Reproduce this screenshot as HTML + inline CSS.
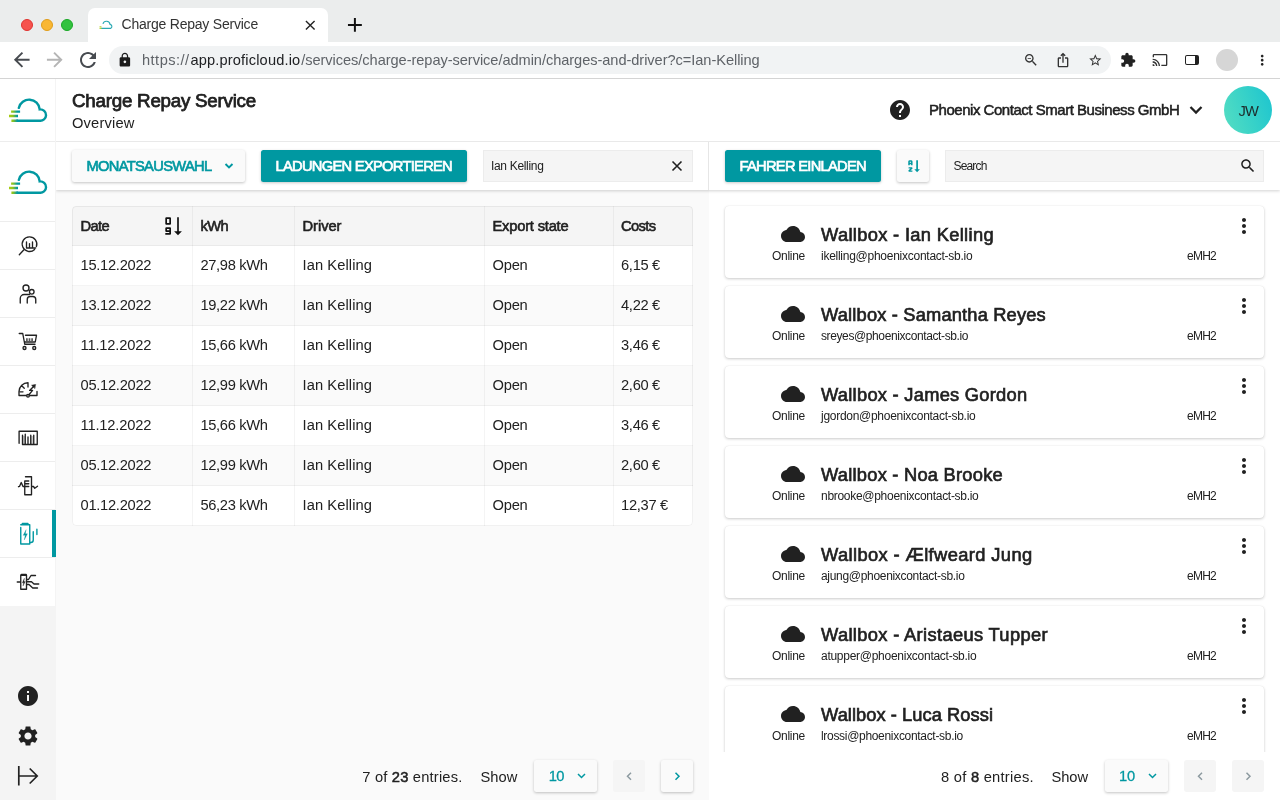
<!DOCTYPE html>
<html lang="en">
<head>
<meta charset="utf-8">
<title>Charge Repay Service</title>
<style>
*{box-sizing:border-box;margin:0;padding:0}
html,body{width:1280px;height:800px;overflow:hidden}
body{position:relative;background:#fff;font-family:"Liberation Sans",sans-serif;color:#212121;-webkit-font-smoothing:antialiased}
.abs{position:absolute}
.t{position:absolute;white-space:nowrap;line-height:1}
svg{display:block;position:absolute;overflow:visible}
b,.b{font-weight:400;-webkit-text-stroke:.5px #212121}
/* browser chrome */
#tabbar{left:0;top:0;width:1280px;height:42px;background:#ebeded}
#tab{left:88px;top:8px;width:240px;height:34px;background:#fff;border-radius:7px 7px 0 0}
.dot{width:12px;height:12px;border-radius:50%;top:19px}
#toolbar{left:0;top:42px;width:1280px;height:37px;background:#fff;border-bottom:1px solid #d4d4d4}
#pill{left:109px;top:46px;width:1002px;height:28px;border-radius:14px;background:#f1f3f4}
/* app */
#side{left:0;top:79px;width:56px;height:721px;background:#f4f4f4}
#sidetop{left:0;top:79px;width:55px;height:527px;background:#fff}
.sep{left:0;width:55px;height:1px;background:#ededed}
#hdr{left:56px;top:79px;width:1224px;height:63px;background:#fff;border-bottom:1px solid #e9e9e9}
#tools{left:56px;top:142px;width:1224px;height:48px;background:#fff;box-shadow:0 1px 3px rgba(0,0,0,.18);clip-path:inset(0 0 -6px 0)}
#leftbg{left:56px;top:190px;width:653px;height:610px;background:#fafafa}
#vdiv{left:708px;top:142px;width:1px;height:48px;background:#e6e6e6}
.btn{border-radius:2.5px;height:32px;top:150px}
.teal{background:#0098a1;box-shadow:0 1px 3px rgba(0,0,0,.22)}
.lite{background:#fafafa;box-shadow:0 1px 3px rgba(0,0,0,.24)}
.field{background:#f5f5f5;border:1px solid #ececec;height:32px;top:150px}
</style>
</head>
<body>
<!-- ============ BROWSER CHROME ============ -->
<div id="tabbar" class="abs"></div>
<div id="tab" class="abs"></div>
<div class="abs dot" style="left:21px;background:#f6534e;border:1px solid #e0332f"></div>
<div class="abs dot" style="left:41px;background:#f9b733;border:1px solid #e09d1a"></div>
<div class="abs dot" style="left:61px;background:#33c23f;border:1px solid #18a825"></div>
<div id="toolbar" class="abs"></div>
<div id="pill" class="abs"></div>

<!-- tab favicon -->
<svg style="left:99.4px;top:20.4px" width="14" height="9" viewBox="8 97 39.600 25.400"><path d="M19.100 107.900A10.400 10.400 0 0 1 39.300 109.400A5.900 5.900 0 0 1 40.800 120.700H13" fill="none" stroke="#2aa9b3" stroke-width="3.200"/><path d="M9.500 120.700H15M9.500 116H15" stroke="#b5d334" stroke-width="3.200"/></svg>
<svg style="left:301.850px;top:16.650px" width="16.500" height="16.500" viewBox="0 0 24 24"><path fill="#222" d="M19 6.41L17.59 5 12 10.590 6.41 5 5 6.41 10.59 12 5 17.59 6.41 19 12 13.41 17.59 19 19 17.59 13.41 12z"/></svg>
<svg style="left:343px;top:13px" width="23.800" height="23.800" viewBox="0 0 24 24"><path fill="#111" d="M19 13h-6v6h-2v-6H5v-2h6V5h2v6h6v2z"/></svg>
<!-- nav -->
<svg style="left:10.300px;top:48.400px" width="23.500" height="23.500" viewBox="0 0 24 24"><path fill="#474b50" d="M20 11H7.83l5.59-5.59L12 4l-8 8 8 8 1.41-1.410L7.83 13H20v-2z"/></svg>
<svg style="left:43.200px;top:48.400px" width="23.500" height="23.500" viewBox="0 0 24 24"><path fill="#b5b5b5" d="M12 4l-1.41 1.41L16.17 11H4v2h12.17l-5.580 5.590L12 20l8-8z"/></svg>
<svg style="left:75.900px;top:47.900px" width="24" height="24" viewBox="0 0 24 24"><path fill="#474b50" d="M17.65 6.35C16.2 4.9 14.21 4 12 4c-4.42 0-7.99 3.58-7.990 8s3.570 8 7.990 8c3.73 0 6.84-2.55 7.73-6h-2.080c-.82 2.33-3.04 4-5.650 4-3.31 0-6-2.690-6-6s2.690-6 6-6c1.66 0 3.140.69 4.220 1.780L13 11h7V4l-2.350 2.350z"/></svg>
<svg style="left:117.100px;top:52.100px" width="15.750" height="15.750" viewBox="0 0 24 24"><path fill="#1c1c1c" fill-rule="evenodd" d="M18 8h-1V6c0-2.760-2.240-5-5-5S7 3.240 7 6v2H6c-1.100 0-2 .9-2 2v10c0 1.100.9 2 2 2h12c1.100 0 2-.9 2-2V10c0-1.100-.9-2-2-2zm-6 9c-1.100 0-2-.9-2-2s.9-2 2-2 2 .9 2 2-.9 2-2 2zm3.100-9H8.900V6c0-1.710 1.390-3.100 3.100-3.100 1.710 0 3.100 1.390 3.100 3.100v2z"/></svg>
<svg style="left:1022.800px;top:52.200px" width="16" height="16" viewBox="0 0 24 24"><path fill="#333" d="M15.5 14h-.79l-.28-.27C15.410 12.590 16 11.110 16 9.500 16 5.910 13.090 3 9.500 3S3 5.910 3 9.500 5.910 16 9.500 16c1.610 0 3.090-.59 4.230-1.570l.27.28v.79l5 4.990L20.490 19l-4.990-5zm-6 0C7.010 14 5 11.990 5 9.500S7.010 5 9.500 5 14 7.010 14 9.500 11.990 14 9.500 14zM7 9h5v1H7z"/></svg>
<svg style="left:1054.900px;top:52.200px" width="16" height="16" viewBox="0 0 24 24"><path fill="#333" d="M16 5l-1.420 1.420-1.590-1.590V16h-1.980V4.830L9.420 6.420 8 5l4-4 4 4zm4 5v11c0 1.100-.9 2-2 2H6c-1.110 0-2-.9-2-2V10c0-1.110.89-2 2-2h3v2H6v11h12V10h-3V8h3c1.100 0 2 .9 2 2z"/></svg>
<svg style="left:1087.600px;top:52.500px" width="14.600" height="14.600" viewBox="0 0 24 24"><path fill="#333" d="M22 9.240l-7.190-.62L12 2 9.190 8.630 2 9.240l5.460 4.730L5.820 21 12 17.270 18.180 21l-1.630-7.030L22 9.240zM12 15.400l-3.760 2.270 1-4.280-3.320-2.880 4.380-.38L12 6.100l1.710 4.040 4.380.38-3.320 2.880 1 4.280L12 15.400z"/></svg>
<svg style="left:1120px;top:52px" width="16" height="16" viewBox="0 0 24 24"><path fill="#222" d="M20.500 11H19V7c0-1.100-.9-2-2-2h-4V3.500C13 2.120 11.880 1 10.500 1S8 2.120 8 3.500V5H4c-1.100 0-1.990.9-1.990 2v3.800H3.500c1.490 0 2.700 1.210 2.700 2.700s-1.210 2.700-2.700 2.700H2V20c0 1.100.9 2 2 2h3.800v-1.500c0-1.490 1.210-2.700 2.700-2.700 1.490 0 2.700 1.210 2.700 2.700V22H17c1.100 0 2-.9 2-2v-4h1.500c1.380 0 2.500-1.120 2.500-2.500S21.880 11 20.500 11z"/></svg>
<svg style="left:1151.600px;top:52.300px" width="16" height="16" viewBox="0 0 24 24"><path fill="#333" d="M21 3H3c-1.100 0-2 .9-2 2v3h2V5h18v14h-7v2h7c1.100 0 2-.9 2-2V5c0-1.100-.9-2-2-2zM1 18v3h3c0-1.660-1.340-3-3-3zm0-4v2c2.760 0 5 2.240 5 5h2c0-3.870-3.130-7-7-7zm0-4v2c4.970 0 9 4.030 9 9h2c0-6.080-4.930-11-11-11z"/></svg>
<div class="abs" style="left:1185.400px;top:54.900px;width:13.500px;height:10.400px;border:1.600px solid #222;border-radius:2px;border-right-width:4.600px"></div>
<div class="abs" style="left:1216px;top:49px;width:22px;height:22px;border-radius:50%;background:#d6d6d6"></div>
<svg style="left:1253.800px;top:52px" width="16.400" height="16.400" viewBox="0 0 24 24"><path fill="#222" d="M12 8c1.100 0 2-.9 2-2s-.9-2-2-2-2 .9-2 2 .9 2 2 2zm0 2c-1.100 0-2 .9-2 2s.9 2 2 2 2-.9 2-2-.9-2-2-2zm0 6c-1.100 0-2 .9-2 2s.9 2 2 2 2-.9 2-2-.9-2-2-2z"/></svg>

<!-- ============ APP ============ -->
<div id="side" class="abs"></div>
<div id="sidetop" class="abs"></div>
<div id="hdr" class="abs"></div>
<div id="leftbg" class="abs"></div>
<div class="abs" id="tbl" style="left:72px;top:206px;width:621px;height:320px;background:#fff;border-radius:4px;overflow:hidden"><div class="abs" style="left:0;top:0;width:621px;height:40px;background:#f5f5f5"></div><div class="abs" style="left:0;top:80px;width:621px;height:40px;background:#fafafa"></div><div class="abs" style="left:0;top:160px;width:621px;height:40px;background:#fafafa"></div><div class="abs" style="left:0;top:240px;width:621px;height:40px;background:#fafafa"></div><div class="abs" style="left:0;top:39px;width:621px;height:1px;background:rgba(0,0,0,.045)"></div><div class="abs" style="left:0;top:79px;width:621px;height:1px;background:rgba(0,0,0,.045)"></div><div class="abs" style="left:0;top:119px;width:621px;height:1px;background:rgba(0,0,0,.045)"></div><div class="abs" style="left:0;top:159px;width:621px;height:1px;background:rgba(0,0,0,.045)"></div><div class="abs" style="left:0;top:199px;width:621px;height:1px;background:rgba(0,0,0,.045)"></div><div class="abs" style="left:0;top:239px;width:621px;height:1px;background:rgba(0,0,0,.045)"></div><div class="abs" style="left:0;top:279px;width:621px;height:1px;background:rgba(0,0,0,.045)"></div><div class="abs" style="left:120px;top:0;width:1px;height:320px;background:rgba(0,0,0,.045)"></div><div class="abs" style="left:222px;top:0;width:1px;height:320px;background:rgba(0,0,0,.045)"></div><div class="abs" style="left:412px;top:0;width:1px;height:320px;background:rgba(0,0,0,.045)"></div><div class="abs" style="left:541px;top:0;width:1px;height:320px;background:rgba(0,0,0,.045)"></div></div><div class="abs" style="left:72px;top:206px;width:621px;height:320px;border:1px solid rgba(0,0,0,.055);border-radius:4px"></div><svg style="left:160px;top:212px" width="28" height="28" viewBox="160 212 28 28"><path fill="#111" fill-rule="evenodd" d="M166.300 217.300H170A1 1 0 0 1 171 218.300V223.800A1 1 0 0 1 170 224.800H166.300A1 1 0 0 1 165.300 223.800V218.300A1 1 0 0 1 166.300 217.300ZM167 219H169.300V223.100H167ZM166.300 227.300H170A1 1 0 0 1 171 228.300V233.800A1 1 0 0 1 170 234.800H165.300V233.100H169.300V232H166.300A1 1 0 0 1 165.300 231V228.300A1 1 0 0 1 166.300 227.300ZM167 229H169.300V230.300H167ZM177.150 217.200H178.850V231.200H181.900L178 235.300L174.100 231.200H177.150Z"/></svg>
<div class="abs" style="left:0;top:0;width:1280px;height:752px;overflow:hidden;will-change:transform"><div class="abs" style="left:725px;top:206px;width:539px;height:72px;background:#fff;border-radius:4px;box-shadow:0 1px 3px rgba(0,0,0,.2),0 0 1px rgba(0,0,0,.12)"></div><svg style="left:781px;top:222.3px" width="24" height="24" viewBox="0 0 24 24"><path fill="#212121" d="M19.350 10.040C18.670 6.590 15.640 4 12 4 9.110 4 6.600 5.640 5.350 8.040 2.340 8.360 0 10.910 0 14c0 3.310 2.690 6 6 6h13c2.760 0 5-2.240 5-5 0-2.640-2.050-4.780-4.650-4.960z"/></svg><svg style="left:1232px;top:214px" width="24" height="24" viewBox="0 0 24 24"><path fill="#212121" d="M12 8c1.100 0 2-.9 2-2s-.9-2-2-2-2 .9-2 2 .9 2 2 2zm0 2c-1.100 0-2 .9-2 2s.9 2 2 2 2-.9 2-2-.9-2-2-2zm0 6c-1.100 0-2 .9-2 2s.9 2 2 2 2-.9 2-2-.9-2-2-2z"/></svg><div class="abs" style="left:725px;top:286px;width:539px;height:72px;background:#fff;border-radius:4px;box-shadow:0 1px 3px rgba(0,0,0,.2),0 0 1px rgba(0,0,0,.12)"></div><svg style="left:781px;top:302.3px" width="24" height="24" viewBox="0 0 24 24"><path fill="#212121" d="M19.350 10.040C18.670 6.590 15.640 4 12 4 9.110 4 6.600 5.640 5.350 8.040 2.340 8.360 0 10.910 0 14c0 3.310 2.690 6 6 6h13c2.760 0 5-2.240 5-5 0-2.640-2.050-4.780-4.650-4.960z"/></svg><svg style="left:1232px;top:294px" width="24" height="24" viewBox="0 0 24 24"><path fill="#212121" d="M12 8c1.100 0 2-.9 2-2s-.9-2-2-2-2 .9-2 2 .9 2 2 2zm0 2c-1.100 0-2 .9-2 2s.9 2 2 2 2-.9 2-2-.9-2-2-2zm0 6c-1.100 0-2 .9-2 2s.9 2 2 2 2-.9 2-2-.9-2-2-2z"/></svg><div class="abs" style="left:725px;top:366px;width:539px;height:72px;background:#fff;border-radius:4px;box-shadow:0 1px 3px rgba(0,0,0,.2),0 0 1px rgba(0,0,0,.12)"></div><svg style="left:781px;top:382.3px" width="24" height="24" viewBox="0 0 24 24"><path fill="#212121" d="M19.350 10.040C18.670 6.590 15.640 4 12 4 9.110 4 6.600 5.640 5.350 8.040 2.340 8.360 0 10.910 0 14c0 3.310 2.690 6 6 6h13c2.760 0 5-2.240 5-5 0-2.640-2.050-4.780-4.650-4.960z"/></svg><svg style="left:1232px;top:374px" width="24" height="24" viewBox="0 0 24 24"><path fill="#212121" d="M12 8c1.100 0 2-.9 2-2s-.9-2-2-2-2 .9-2 2 .9 2 2 2zm0 2c-1.100 0-2 .9-2 2s.9 2 2 2 2-.9 2-2-.9-2-2-2zm0 6c-1.100 0-2 .9-2 2s.9 2 2 2 2-.9 2-2-.9-2-2-2z"/></svg><div class="abs" style="left:725px;top:446px;width:539px;height:72px;background:#fff;border-radius:4px;box-shadow:0 1px 3px rgba(0,0,0,.2),0 0 1px rgba(0,0,0,.12)"></div><svg style="left:781px;top:462.3px" width="24" height="24" viewBox="0 0 24 24"><path fill="#212121" d="M19.350 10.040C18.670 6.590 15.640 4 12 4 9.110 4 6.600 5.640 5.350 8.040 2.340 8.360 0 10.910 0 14c0 3.310 2.690 6 6 6h13c2.760 0 5-2.240 5-5 0-2.640-2.050-4.780-4.650-4.960z"/></svg><svg style="left:1232px;top:454px" width="24" height="24" viewBox="0 0 24 24"><path fill="#212121" d="M12 8c1.100 0 2-.9 2-2s-.9-2-2-2-2 .9-2 2 .9 2 2 2zm0 2c-1.100 0-2 .9-2 2s.9 2 2 2 2-.9 2-2-.9-2-2-2zm0 6c-1.100 0-2 .9-2 2s.9 2 2 2 2-.9 2-2-.9-2-2-2z"/></svg><div class="abs" style="left:725px;top:526px;width:539px;height:72px;background:#fff;border-radius:4px;box-shadow:0 1px 3px rgba(0,0,0,.2),0 0 1px rgba(0,0,0,.12)"></div><svg style="left:781px;top:542.3px" width="24" height="24" viewBox="0 0 24 24"><path fill="#212121" d="M19.350 10.040C18.670 6.590 15.640 4 12 4 9.110 4 6.600 5.640 5.350 8.040 2.340 8.360 0 10.910 0 14c0 3.310 2.690 6 6 6h13c2.760 0 5-2.240 5-5 0-2.640-2.050-4.780-4.650-4.960z"/></svg><svg style="left:1232px;top:534px" width="24" height="24" viewBox="0 0 24 24"><path fill="#212121" d="M12 8c1.100 0 2-.9 2-2s-.9-2-2-2-2 .9-2 2 .9 2 2 2zm0 2c-1.100 0-2 .9-2 2s.9 2 2 2 2-.9 2-2-.9-2-2-2zm0 6c-1.100 0-2 .9-2 2s.9 2 2 2 2-.9 2-2-.9-2-2-2z"/></svg><div class="abs" style="left:725px;top:606px;width:539px;height:72px;background:#fff;border-radius:4px;box-shadow:0 1px 3px rgba(0,0,0,.2),0 0 1px rgba(0,0,0,.12)"></div><svg style="left:781px;top:622.3px" width="24" height="24" viewBox="0 0 24 24"><path fill="#212121" d="M19.350 10.040C18.670 6.590 15.640 4 12 4 9.110 4 6.600 5.640 5.350 8.040 2.340 8.360 0 10.910 0 14c0 3.310 2.690 6 6 6h13c2.760 0 5-2.240 5-5 0-2.640-2.050-4.780-4.650-4.960z"/></svg><svg style="left:1232px;top:614px" width="24" height="24" viewBox="0 0 24 24"><path fill="#212121" d="M12 8c1.100 0 2-.9 2-2s-.9-2-2-2-2 .9-2 2 .9 2 2 2zm0 2c-1.100 0-2 .9-2 2s.9 2 2 2 2-.9 2-2-.9-2-2-2zm0 6c-1.100 0-2 .9-2 2s.9 2 2 2 2-.9 2-2-.9-2-2-2z"/></svg><div class="abs" style="left:725px;top:686px;width:539px;height:72px;background:#fff;border-radius:4px;box-shadow:0 1px 3px rgba(0,0,0,.2),0 0 1px rgba(0,0,0,.12)"></div><svg style="left:781px;top:702.3px" width="24" height="24" viewBox="0 0 24 24"><path fill="#212121" d="M19.350 10.040C18.670 6.590 15.640 4 12 4 9.110 4 6.600 5.640 5.350 8.040 2.340 8.360 0 10.910 0 14c0 3.310 2.690 6 6 6h13c2.760 0 5-2.240 5-5 0-2.640-2.050-4.780-4.650-4.960z"/></svg><svg style="left:1232px;top:694px" width="24" height="24" viewBox="0 0 24 24"><path fill="#212121" d="M12 8c1.100 0 2-.9 2-2s-.9-2-2-2-2 .9-2 2 .9 2 2 2zm0 2c-1.100 0-2 .9-2 2s.9 2 2 2 2-.9 2-2-.9-2-2-2zm0 6c-1.100 0-2 .9-2 2s.9 2 2 2 2-.9 2-2-.9-2-2-2z"/></svg>
<div class="t" style="left:821.0px;top:226.0px;font-size:18.3px;color:#212121;-webkit-text-stroke:0.66px #212121;letter-spacing:0.33px">Wallbox - Ian Kelling</div>
<div class="t" style="left:821.0px;top:249.9px;font-size:12px;color:#212121;letter-spacing:-0.26px">ikelling@phoenixcontact-sb.io</div>
<div class="t" style="left:772.0px;top:250.2px;font-size:12px;color:#212121;letter-spacing:-0.28px">Online</div>
<div class="t" style="left:1187.0px;top:249.9px;font-size:12px;color:#212121;letter-spacing:-0.75px">eMH2</div>
<div class="t" style="left:821.0px;top:306.0px;font-size:18.3px;color:#212121;-webkit-text-stroke:0.66px #212121;letter-spacing:0.17px">Wallbox - Samantha Reyes</div>
<div class="t" style="left:821.0px;top:329.9px;font-size:12px;color:#212121;letter-spacing:-0.39px">sreyes@phoenixcontact-sb.io</div>
<div class="t" style="left:772.0px;top:330.2px;font-size:12px;color:#212121;letter-spacing:-0.28px">Online</div>
<div class="t" style="left:1187.0px;top:329.9px;font-size:12px;color:#212121;letter-spacing:-0.75px">eMH2</div>
<div class="t" style="left:821.0px;top:386.0px;font-size:18.3px;color:#212121;-webkit-text-stroke:0.66px #212121;letter-spacing:0.27px">Wallbox - James Gordon</div>
<div class="t" style="left:821.0px;top:409.9px;font-size:12px;color:#212121;letter-spacing:-0.28px">jgordon@phoenixcontact-sb.io</div>
<div class="t" style="left:772.0px;top:410.2px;font-size:12px;color:#212121;letter-spacing:-0.28px">Online</div>
<div class="t" style="left:1187.0px;top:409.9px;font-size:12px;color:#212121;letter-spacing:-0.75px">eMH2</div>
<div class="t" style="left:821.0px;top:466.0px;font-size:18.3px;color:#212121;-webkit-text-stroke:0.66px #212121;letter-spacing:0.24px">Wallbox - Noa Brooke</div>
<div class="t" style="left:821.0px;top:489.9px;font-size:12px;color:#212121;letter-spacing:-0.29px">nbrooke@phoenixcontact-sb.io</div>
<div class="t" style="left:772.0px;top:490.2px;font-size:12px;color:#212121;letter-spacing:-0.28px">Online</div>
<div class="t" style="left:1187.0px;top:489.9px;font-size:12px;color:#212121;letter-spacing:-0.75px">eMH2</div>
<div class="t" style="left:821.0px;top:546.0px;font-size:18.3px;color:#212121;-webkit-text-stroke:0.66px #212121;letter-spacing:0.39px">Wallbox - Ælfweard Jung</div>
<div class="t" style="left:821.0px;top:569.9px;font-size:12px;color:#212121;letter-spacing:-0.31px">ajung@phoenixcontact-sb.io</div>
<div class="t" style="left:772.0px;top:570.2px;font-size:12px;color:#212121;letter-spacing:-0.28px">Online</div>
<div class="t" style="left:1187.0px;top:569.9px;font-size:12px;color:#212121;letter-spacing:-0.75px">eMH2</div>
<div class="t" style="left:821.0px;top:626.0px;font-size:18.3px;color:#212121;-webkit-text-stroke:0.66px #212121;letter-spacing:0.35px">Wallbox - Aristaeus Tupper</div>
<div class="t" style="left:821.0px;top:649.9px;font-size:12px;color:#212121;letter-spacing:-0.27px">atupper@phoenixcontact-sb.io</div>
<div class="t" style="left:772.0px;top:650.2px;font-size:12px;color:#212121;letter-spacing:-0.28px">Online</div>
<div class="t" style="left:1187.0px;top:649.9px;font-size:12px;color:#212121;letter-spacing:-0.75px">eMH2</div>
<div class="t" style="left:821.0px;top:706.0px;font-size:18.3px;color:#212121;-webkit-text-stroke:0.66px #212121;letter-spacing:0.05px">Wallbox - Luca Rossi</div>
<div class="t" style="left:821.0px;top:729.9px;font-size:12px;color:#212121;letter-spacing:-0.31px">lrossi@phoenixcontact-sb.io</div>
<div class="t" style="left:772.0px;top:730.2px;font-size:12px;color:#212121;letter-spacing:-0.28px">Online</div>
<div class="t" style="left:1187.0px;top:729.9px;font-size:12px;color:#212121;letter-spacing:-0.75px">eMH2</div>
</div>
<div id="tools" class="abs"></div>
<div id="vdiv" class="abs"></div>
<div class="abs sep" style="top:141px"></div><div class="abs sep" style="top:221px"></div><div class="abs sep" style="top:269px"></div><div class="abs sep" style="top:317px"></div><div class="abs sep" style="top:365px"></div><div class="abs sep" style="top:413px"></div><div class="abs sep" style="top:461px"></div><div class="abs sep" style="top:509px"></div><div class="abs sep" style="top:557px"></div>
<div class="abs" style="left:52px;top:510px;width:4px;height:47px;background:#0098a1"></div>
<svg style="left:0;top:79px" width="56" height="721" viewBox="0 79 56 721">
<defs><linearGradient id="lg" gradientUnits="userSpaceOnUse" x1="9" y1="0" x2="20" y2="0"><stop offset="0" stop-color="#a8cc10"/><stop offset=".35" stop-color="#8fc31f"/><stop offset=".75" stop-color="#0098a1"/><stop offset="1" stop-color="#0098a1"/></linearGradient></defs>
<path d="M18.800 107.9A10.600 10.600 0 0 1 39.700 109.4A5.700 5.700 0 1 1 39.500 120.7H17" fill="none" stroke="#0098a1" stroke-width="2.4" stroke-linecap="round"/><path d="M11.4 120.7H18M9 116H18M11.1 111.6H20.1" fill="none" stroke="url(#lg)" stroke-width="2.4"/><path d="M18.800 179.9A10.600 10.600 0 0 1 39.700 181.4A5.700 5.700 0 1 1 39.500 192.7H17" fill="none" stroke="#0098a1" stroke-width="2.4" stroke-linecap="round"/><path d="M11.4 192.7H18M9 188H18M11.1 183.6H20.1" fill="none" stroke="url(#lg)" stroke-width="2.4"/>
<g fill="none" stroke="#222" stroke-width="1.35" stroke-linecap="round" stroke-linejoin="round">
<!-- analytics -->
<path d="M34.6 249.4A7.3 7.3 0 1 1 36.4 246.6M23.9 249.8L19.3 254.7M26.5 242V248H35.6M29.5 243.6V248M32.5 242V248"/>
<!-- users -->
<circle cx="26" cy="288" r="3"/><circle cx="31.75" cy="291.75" r="2.3"/>
<path d="M20.25 303V298.5a4 4 0 0 1 4-4H29.5M27.25 303V299.5a3 3 0 0 1 3-3h2.5a3 3 0 0 1 3 3V303"/>
<!-- cart -->
<path d="M19.25 333.5H22.75L24.75 344.25H35M25.5 335.25H36.5L35.25 342H25"/>
<path d="M26.9 338.2V342M29.5 338.2V342M32.1 338.2V342" stroke="#555" stroke-width="1.7" stroke-linecap="butt"/>
<circle cx="24.5" cy="348" r="1.5"/><circle cx="34.25" cy="348" r="1.5"/>
<!-- gauge -->
<path d="M37 391.5V395.5H19V391.5A9 9 0 0 1 28 382.75V387M21.75 385.75L24.25 388.25M20.25 391.85H23M28.9 394.7L32.6 390.4H29.6L33.6 386.4"/>
<circle cx="28" cy="395.75" r="1.3" fill="#fff"/>
<path d="M35.3 384.6L31.6 385.3L34.6 388.3Z" fill="#222" stroke-width=".6"/>
<!-- chart -->
<path d="M22.8 436h2.2v8h-2.2zM31 436h2.6v8H31z" fill="#ccc" stroke="none"/>
<path d="M19.1 443.25V431.25H37.25V444.5H22.5V435.25M25.25 434.25V444M28 437V444M30.75 435.25V444M33.75 435.25V444"/>
<!-- meter -->
<path d="M24.75 481V494.75H31.5V476.75H25.5M24.75 481H28.75M24.75 483.75H28.75M24.75 486.5H28.75M18.5 486.7L19.6 486.3L21.25 482.5L23 486.5H24.75M31.5 486.5H33.5L34.75 488.25L37.5 486.25"/>
<!-- connector -->
<path d="M20.75 575.25H26.5V589.25H20.75ZM17.25 582H20.75M26.5 579.5H28.5L31 575.5H35.5M26.5 581.75H31.5L34 584H38.75M26.5 584.5H29L32.75 588H37.5"/>
<path d="M21.5 574.6H26" stroke-width="1.9"/>
<path d="M24.3 578.5L22.3 582.8H23.6L23 586L25.3 581.6H24Z" fill="#222" stroke-width=".3"/>
<!-- logout -->
<path d="M18.8 766V785.5M18.8 776H37M29.7 768.5L37.2 776L29.7 783.5" stroke-width="1.7" stroke-linecap="butt" stroke-linejoin="miter"/>
</g>
<!-- charging (active) -->
<g fill="none" stroke="#0098a1" stroke-width="1.4" stroke-linecap="round" stroke-linejoin="round">
<path d="M20.75 527.5V544H29.75V524.75H20.75M29.75 542.5H30.75A2.5 2.5 0 0 0 33.25 540V531.75M36.9 529.25V534.5"/>
<path d="M22.5 523.6H27.75" stroke-width="1.9"/>
<path d="M26 530L23.2 535.3H25.2L24.3 540L27.4 533.8H25.4Z" fill="#0098a1" stroke-width=".3"/>
</g>
</svg>
<svg style="left:16px;top:684px" width="24" height="24" viewBox="0 0 24 24"><path fill="#212121" d="M12 2C6.480 2 2 6.480 2 12s4.480 10 10 10 10-4.480 10-10S17.520 2 12 2zm1 15h-2v-6h2v6zm0-8h-2V7h2v2z"/></svg>
<svg style="left:16px;top:724px" width="24" height="24" viewBox="0 0 24 24"><path fill="#212121" d="M19.140 12.940c.04-.3.06-.61.06-.94 0-.32-.02-.64-.07-.94l2.030-1.580c.18-.14.23-.41.12-.61l-1.920-3.320c-.12-.22-.37-.29-.59-.22l-2.390.96c-.5-.38-1.030-.7-1.620-.94l-.36-2.540c-.04-.24-.24-.41-.48-.41h-3.840c-.24 0-.43.17-.47.41l-.36 2.540c-.59.24-1.130.57-1.620.94l-2.390-.96c-.22-.08-.47 0-.59.22L2.740 8.870c-.12.21-.08.47.12.61l2.030 1.580c-.05.3-.09.63-.09.94s.02.64.07.940l-2.030 1.580c-.18.14-.23.41-.12.61l1.920 3.320c.12.22.37.29.59.22l2.390-.96c.5.38 1.030.7 1.620.94l.36 2.540c.05.24.24.41.48.41h3.840c.24 0 .44-.17.47-.41l.36-2.540c.59-.24 1.130-.56 1.620-.94l2.390.96c.22.08.47 0 .59-.22l1.920-3.320c.12-.22.07-.47-.12-.61l-2.010-1.580zM12 15.600c-1.980 0-3.600-1.620-3.600-3.600s1.620-3.600 3.600-3.600 3.600 1.620 3.600 3.600-1.620 3.600-3.600 3.600z"/></svg>


<svg style="left:888px;top:98px" width="24" height="24" viewBox="0 0 24 24"><path fill="#212121" d="M12 2C6.480 2 2 6.480 2 12s4.480 10 10 10 10-4.480 10-10S17.520 2 12 2zm1 17h-2v-2h2v2zm2.070-7.750l-.9.92C13.450 12.900 13 13.500 13 15h-2v-.5c0-1.100.45-2.100 1.170-2.830l1.240-1.260c.37-.36.59-.86.59-1.410 0-1.100-.9-2-2-2s-2 .9-2 2H8c0-2.210 1.790-4 4-4s4 1.790 4 4c0 .88-.36 1.680-.93 2.250z"/></svg>
<svg style="left:1189px;top:105px" width="14" height="10" viewBox="0 0 14 10"><path d="M1.500 2L7 7.500L12.500 2" fill="none" stroke="#212121" stroke-width="2.300"/></svg>
<div class="abs" style="left:1224px;top:86px;width:48px;height:48px;border-radius:50%;background:linear-gradient(72deg,#56dec2 0%,#38d2c8 50%,#1cc4d0 100%)"></div>


<div class="abs btn lite" style="left:72px;width:173px"></div>
<svg style="left:223px;top:159.600px" width="12" height="12" viewBox="0 0 12 12"><path d="M2.500 4L6 7.500L9.500 4" fill="none" stroke="#0098a1" stroke-width="1.900"/></svg>
<div class="abs btn teal" style="left:261px;width:206px"></div>
<div class="abs field" style="left:483px;width:210px"></div>
<svg style="left:670px;top:159px" width="14" height="14" viewBox="0 0 14 14"><path d="M2.500 2.500L11.500 11.500M11.500 2.500L2.500 11.500" fill="none" stroke="#212121" stroke-width="1.600"/></svg>
<div class="abs btn teal" style="left:725px;width:156px"></div>
<div class="abs btn lite" style="left:897px;width:32px"></div>
<svg style="left:897px;top:150px" width="32" height="32" viewBox="897 150 32 32"><g fill="none" stroke="#0098a1"><path d="M909 165.300V161.600A.8.800 0 0 1 909.800 160.900H911A.8.800 0 0 1 911.800 161.600V165.300M909 163.600H911.800" stroke-width="1.500"/><path d="M908.600 167.900H912.100L908.800 171.100H912.400" stroke-width="1.400" stroke-linejoin="bevel"/><path d="M917.100 160.300V170" stroke-width="1.700"/></g><path d="M914.300 169.200H919.900L917.100 172.300Z" fill="#0098a1"/></svg>
<div class="abs field" style="left:945px;width:319px"></div>
<svg style="left:1239.300px;top:157.400px" width="17.700" height="17.700" viewBox="0 0 24 24"><path fill="#212121" d="M15.500 14h-.79l-.28-.27C15.410 12.590 16 11.110 16 9.500 16 5.910 13.090 3 9.500 3S3 5.910 3 9.500 5.910 16 9.500 16c1.610 0 3.090-.59 4.230-1.570l.27.28v.79l5 4.990L20.490 19l-4.990-5zm-6 0C7.010 14 5 11.990 5 9.500S7.010 5 9.500 5 14 7.010 14 9.500 11.990 14 9.500 14z"/></svg>

<div class="abs" style="left:709px;top:752px;width:571px;height:48px;background:#fff"></div><div class="abs btn lite" style="left:534px;top:760px;width:63px"></div><svg style="left:576.5px;top:773.0px" width="9" height="6" viewBox="0 0 9 6"><path d="M1 1L4.500 4.500L8 1" fill="none" stroke="#0098a1" stroke-width="1.500"/></svg><div class="abs" style="left:613px;top:760px;width:32px;height:32px;background:#f5f5f5;border-radius:3px"></div><svg style="left:625.7px;top:771.7px" width="7" height="9" viewBox="0 0 7 9"><path d="M5 .8L1.500 4.300L5 7.800" fill="none" stroke="#8d9aa0" stroke-width="1.500"/></svg><div class="abs btn lite" style="left:661px;top:760px;width:32px"></div><svg style="left:673.7px;top:771.7px" width="7" height="9" viewBox="0 0 7 9"><path d="M1.500 .8L5 4.300L1.500 7.800" fill="none" stroke="#0098a1" stroke-width="1.500"/></svg><div class="abs btn lite" style="left:1105px;top:760px;width:63px"></div><svg style="left:1147.5px;top:773.0px" width="9" height="6" viewBox="0 0 9 6"><path d="M1 1L4.500 4.500L8 1" fill="none" stroke="#0098a1" stroke-width="1.500"/></svg><div class="abs" style="left:1184px;top:760px;width:32px;height:32px;background:#f5f5f5;border-radius:3px"></div><svg style="left:1196.7px;top:771.7px" width="7" height="9" viewBox="0 0 7 9"><path d="M5 .8L1.500 4.300L5 7.800" fill="none" stroke="#8d9aa0" stroke-width="1.500"/></svg><div class="abs" style="left:1232px;top:760px;width:32px;height:32px;background:#f5f5f5;border-radius:3px"></div><svg style="left:1244.7px;top:771.7px" width="7" height="9" viewBox="0 0 7 9"><path d="M1.500 .8L5 4.300L1.500 7.800" fill="none" stroke="#8d9aa0" stroke-width="1.500"/></svg>
<div class="abs" style="left:0;top:0;width:1280px;height:800px;will-change:transform">
<div class="t" style="left:121.5px;top:16.8px;font-size:14px;color:#333;letter-spacing:-0.22px">Charge Repay Service</div>
<div class="t" style="left:142.0px;top:52.6px;font-size:14.6px;color:#5f6368;letter-spacing:0.47px">https://</div>
<div class="t" style="left:190.4px;top:52.6px;font-size:14.6px;color:#202124;letter-spacing:0.17px">app.proficloud.io</div>
<div class="t" style="left:301.2px;top:52.6px;font-size:14.6px;color:#5f6368;letter-spacing:-0.05px">/services/charge-repay-service/admin/charges-and-driver?c=Ian-Kelling</div>
<div class="t" style="left:72.0px;top:91.7px;font-size:18.8px;color:#212121;-webkit-text-stroke:0.75px #212121;letter-spacing:-0.25px">Charge Repay Service</div>
<div class="t" style="left:72.0px;top:115.9px;font-size:14.7px;color:#212121;letter-spacing:0.16px">Overview</div>
<div class="t" style="left:929.0px;top:102.2px;font-size:15px;color:#212121;-webkit-text-stroke:0.51px #212121;letter-spacing:-0.47px">Phoenix Contact Smart Business GmbH</div>
<div class="t" style="left:1238.6px;top:104.4px;font-size:14.7px;color:#1d2b2b;letter-spacing:-0.91px">JW</div>
<div class="t" style="left:86.4px;top:158.9px;font-size:14.7px;color:#0098a1;-webkit-text-stroke:0.66px #0098a1;letter-spacing:-0.67px">MONATSAUSWAHL</div>
<div class="t" style="left:275.5px;top:158.9px;font-size:14.7px;color:#fff;-webkit-text-stroke:0.66px #fff;letter-spacing:-0.71px">LADUNGEN EXPORTIEREN</div>
<div class="t" style="left:491.0px;top:160.1px;font-size:12px;color:#212121;letter-spacing:-0.32px">Ian Kelling</div>
<div class="t" style="left:739.5px;top:158.9px;font-size:14.7px;color:#fff;-webkit-text-stroke:0.66px #fff;letter-spacing:-0.71px">FAHRER EINLADEN</div>
<div class="t" style="left:953.5px;top:160.4px;font-size:12px;color:#212121;letter-spacing:-0.84px">Search</div>
<div class="t" style="left:80.5px;top:218.6px;font-size:14.7px;color:#212121;-webkit-text-stroke:0.59px #212121;letter-spacing:-0.63px">Date</div>
<div class="t" style="left:200.5px;top:218.6px;font-size:14.7px;color:#212121;-webkit-text-stroke:0.59px #212121;letter-spacing:-0.62px">kWh</div>
<div class="t" style="left:302.5px;top:218.6px;font-size:14.7px;color:#212121;-webkit-text-stroke:0.59px #212121;letter-spacing:-0.03px">Driver</div>
<div class="t" style="left:492.5px;top:218.6px;font-size:14.7px;color:#212121;-webkit-text-stroke:0.59px #212121;letter-spacing:-0.20px">Export state</div>
<div class="t" style="left:621.0px;top:218.6px;font-size:14.7px;color:#212121;-webkit-text-stroke:0.59px #212121;letter-spacing:-0.61px">Costs</div>
<div class="t" style="left:80.5px;top:257.9px;font-size:14.7px;color:#212121;letter-spacing:-0.28px">15.12.2022</div>
<div class="t" style="left:200.5px;top:257.9px;font-size:14.7px;color:#212121;letter-spacing:-0.36px">27,98 kWh</div>
<div class="t" style="left:302.5px;top:257.9px;font-size:14.7px;color:#212121;letter-spacing:0.08px">Ian Kelling</div>
<div class="t" style="left:492.5px;top:257.9px;font-size:14.7px;color:#212121;letter-spacing:-0.23px">Open</div>
<div class="t" style="left:621.0px;top:257.9px;font-size:14.7px;color:#212121;letter-spacing:-0.31px">6,15 €</div>
<div class="t" style="left:80.5px;top:297.9px;font-size:14.7px;color:#212121;letter-spacing:-0.28px">13.12.2022</div>
<div class="t" style="left:200.5px;top:297.9px;font-size:14.7px;color:#212121;letter-spacing:-0.36px">19,22 kWh</div>
<div class="t" style="left:302.5px;top:297.9px;font-size:14.7px;color:#212121;letter-spacing:0.08px">Ian Kelling</div>
<div class="t" style="left:492.5px;top:297.9px;font-size:14.7px;color:#212121;letter-spacing:-0.23px">Open</div>
<div class="t" style="left:621.0px;top:297.9px;font-size:14.7px;color:#212121;letter-spacing:-0.31px">4,22 €</div>
<div class="t" style="left:80.5px;top:337.9px;font-size:14.7px;color:#212121;letter-spacing:-0.17px">11.12.2022</div>
<div class="t" style="left:200.5px;top:337.9px;font-size:14.7px;color:#212121;letter-spacing:-0.36px">15,66 kWh</div>
<div class="t" style="left:302.5px;top:337.9px;font-size:14.7px;color:#212121;letter-spacing:0.08px">Ian Kelling</div>
<div class="t" style="left:492.5px;top:337.9px;font-size:14.7px;color:#212121;letter-spacing:-0.23px">Open</div>
<div class="t" style="left:621.0px;top:337.9px;font-size:14.7px;color:#212121;letter-spacing:-0.31px">3,46 €</div>
<div class="t" style="left:80.5px;top:377.9px;font-size:14.7px;color:#212121;letter-spacing:-0.28px">05.12.2022</div>
<div class="t" style="left:200.5px;top:377.9px;font-size:14.7px;color:#212121;letter-spacing:-0.36px">12,99 kWh</div>
<div class="t" style="left:302.5px;top:377.9px;font-size:14.7px;color:#212121;letter-spacing:0.08px">Ian Kelling</div>
<div class="t" style="left:492.5px;top:377.9px;font-size:14.7px;color:#212121;letter-spacing:-0.23px">Open</div>
<div class="t" style="left:621.0px;top:377.9px;font-size:14.7px;color:#212121;letter-spacing:-0.31px">2,60 €</div>
<div class="t" style="left:80.5px;top:417.9px;font-size:14.7px;color:#212121;letter-spacing:-0.17px">11.12.2022</div>
<div class="t" style="left:200.5px;top:417.9px;font-size:14.7px;color:#212121;letter-spacing:-0.36px">15,66 kWh</div>
<div class="t" style="left:302.5px;top:417.9px;font-size:14.7px;color:#212121;letter-spacing:0.08px">Ian Kelling</div>
<div class="t" style="left:492.5px;top:417.9px;font-size:14.7px;color:#212121;letter-spacing:-0.23px">Open</div>
<div class="t" style="left:621.0px;top:417.9px;font-size:14.7px;color:#212121;letter-spacing:-0.31px">3,46 €</div>
<div class="t" style="left:80.5px;top:457.9px;font-size:14.7px;color:#212121;letter-spacing:-0.28px">05.12.2022</div>
<div class="t" style="left:200.5px;top:457.9px;font-size:14.7px;color:#212121;letter-spacing:-0.36px">12,99 kWh</div>
<div class="t" style="left:302.5px;top:457.9px;font-size:14.7px;color:#212121;letter-spacing:0.08px">Ian Kelling</div>
<div class="t" style="left:492.5px;top:457.9px;font-size:14.7px;color:#212121;letter-spacing:-0.23px">Open</div>
<div class="t" style="left:621.0px;top:457.9px;font-size:14.7px;color:#212121;letter-spacing:-0.31px">2,60 €</div>
<div class="t" style="left:80.5px;top:497.9px;font-size:14.7px;color:#212121;letter-spacing:-0.28px">01.12.2022</div>
<div class="t" style="left:200.5px;top:497.9px;font-size:14.7px;color:#212121;letter-spacing:-0.36px">56,23 kWh</div>
<div class="t" style="left:302.5px;top:497.9px;font-size:14.7px;color:#212121;letter-spacing:0.08px">Ian Kelling</div>
<div class="t" style="left:492.5px;top:497.9px;font-size:14.7px;color:#212121;letter-spacing:-0.23px">Open</div>
<div class="t" style="left:621.0px;top:497.9px;font-size:14.7px;color:#212121;letter-spacing:-0.29px">12,37 €</div>
<div class="t" style="left:362.3px;top:770.1px;font-size:14.7px;color:#212121;letter-spacing:0.19px">7 of <b>23</b> entries.</div>
<div class="t" style="left:480.4px;top:770.1px;font-size:14.7px;color:#212121;letter-spacing:0.04px">Show</div>
<div class="t" style="left:548.7px;top:768.7px;font-size:14.7px;color:#0098a1;-webkit-text-stroke:0.29px #0098a1;letter-spacing:-0.52px">10</div>
<div class="t" style="left:941.1px;top:770.1px;font-size:14.7px;color:#212121;letter-spacing:0.25px">8 of <b>8</b> entries.</div>
<div class="t" style="left:1051.6px;top:770.1px;font-size:14.7px;color:#212121;letter-spacing:-0.11px">Show</div>
<div class="t" style="left:1119.0px;top:768.7px;font-size:14.7px;color:#0098a1;-webkit-text-stroke:0.29px #0098a1;letter-spacing:-0.17px">10</div>
</div>

</body>
</html>
